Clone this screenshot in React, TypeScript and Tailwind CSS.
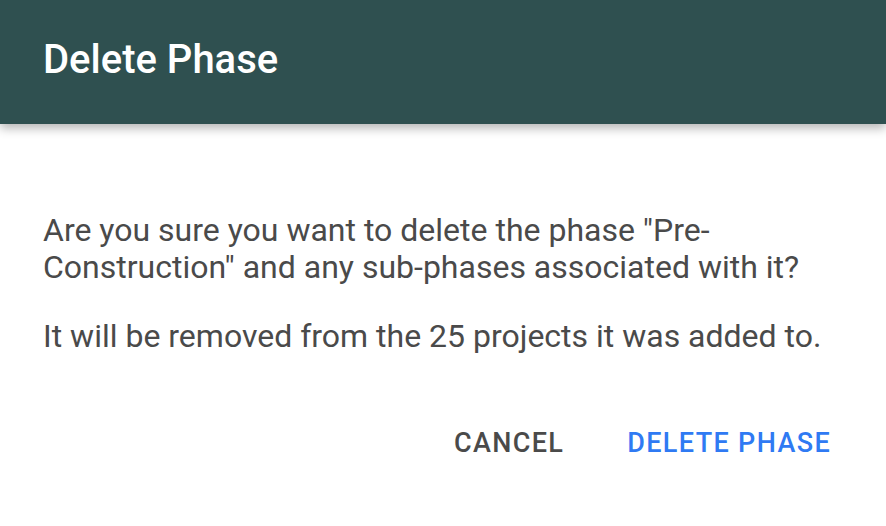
export default function App() {
  return (
    <div className="w-[886px] h-[526px] bg-white font-['Roboto',sans-serif] overflow-hidden">
      {/* Header */}
      <div className="relative z-10 h-[124px] bg-[#2f5050] px-[43px] pt-[36px] shadow-[0_4px_10px_rgba(0,0,0,0.3)]">
        <h2 className="text-[40px] leading-[47px] font-medium text-white">Delete Phase</h2>
      </div>

      {/* Body */}
      <div className="px-[43px] pt-[88px] text-[32px] leading-[37px] text-[#4a4a4a]">
        <p>
          Are you sure you want to delete the phase "Pre-
          <br />
          Construction" and any sub-phases associated with it?
        </p>
        <p className="mt-[32px]">It will be removed from the 25 projects it was added to.</p>
      </div>

      {/* Buttons */}
      <div className="mt-[72px] flex justify-end items-center gap-[63px] pr-[55px] text-[27px] leading-[32px] font-medium tracking-[1.35px]">
        <button className="text-[#4a4a4a]">CANCEL</button>
        <button className="text-[#2f7af3]">DELETE PHASE</button>
      </div>
    </div>
  )
}
